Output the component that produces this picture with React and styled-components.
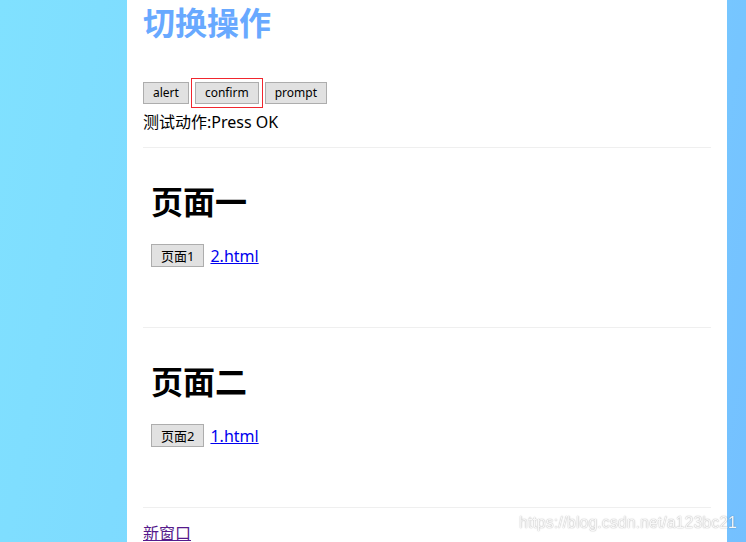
import React from "react";
import styled, { createGlobalStyle } from "styled-components";

const Global = createGlobalStyle`
  html, body { margin: 0; padding: 0; height: 100%; overflow: hidden; }
  body {
    background: linear-gradient(100deg, #80e1ff 0%, #7bd2ff 60%, #74c0ff 100%);
    font-family: "Noto Sans", "Noto Sans CJK SC", sans-serif;
  }
`;

const Stage = styled.div`
  display: flex;
  min-height: 100vh;
  padding-left: 127px;
`;

const Column = styled.main`
  width: 600px;
  min-height: 100vh;
  background: #fff;
  box-sizing: border-box;
  padding: 2px 16px 0;
`;

const Title = styled.h1`
  margin: 0;
  font-family: "Noto Sans CJK SC", sans-serif;
  font-size: 32px;
  line-height: 38px;
  font-weight: 700;
  color: #68a9ff;
`;

const ButtonRow = styled.div`
  display: flex;
  gap: 6px;
  margin-top: 42px;
  height: 22px;
`;

const Btn = styled.button`
  height: ${(p) => (p.$tall ? 23 : 22)}px;
  padding: 0 9px;
  margin: 0;
  border: 1px solid #adadad;
  background: #e1e1e1;
  color: #000;
  font-family: "Noto Sans", "Noto Sans CJK SC", sans-serif;
  font-size: ${(p) => (p.$tall ? 13 : 12)}px;
  line-height: 18px;
  border-radius: 0;
  outline: ${(p) => (p.$focused ? "1px solid #f0262e" : "none")};
  outline-offset: 3px;
`;

const Status = styled.div`
  margin-top: 8px;
  font-size: 16px;
  line-height: 20px;
  color: #000;
`;

const Rule = styled.hr`
  margin: ${(p) => p.$top}px 0 0;
  border: 0;
  border-top: 1px solid #efefef;
  height: 0;
`;

const Section = styled.section`
  height: 179px;
  box-sizing: border-box;
  padding: 32px 8px 0;
`;

const PageHeading = styled.h2`
  margin: 0;
  font-family: "Noto Sans CJK SC", sans-serif;
  font-size: 32px;
  line-height: 40px;
  font-weight: 700;
  color: #000;
`;

const PageRow = styled.div`
  display: flex;
  align-items: center;
  gap: 6px;
  margin-top: 24px;
`;

const Link = styled.a`
  font-size: 16px;
  line-height: 20px;
  color: ${(p) => (p.$visited ? "#551a8b" : "#0000ee")};
  text-decoration: underline;
`;

const Footer = styled.div`
  margin-top: 15px;
  line-height: 20px;
`;

const Watermark = styled.div`
  position: fixed;
  right: 9px;
  bottom: 10px;
  font-family: "Liberation Sans", Arial, sans-serif;
  font-size: 16px;
  color: rgba(255, 255, 255, 0.92);
  text-shadow: 0 0 1px rgba(0, 0, 0, 0.35), 0 0 2px rgba(0, 0, 0, 0.15);
  pointer-events: none;
`;

const pages = [
  { title: "页面一", btn: "页面1", link: "2.html" },
  { title: "页面二", btn: "页面2", link: "1.html" },
];

export default function App() {
  return (
    <>
      <Global />
      <Stage>
        <Column>
          <Title>切换操作</Title>
          <ButtonRow>
            <Btn>alert</Btn>
            <Btn $focused>confirm</Btn>
            <Btn>prompt</Btn>
          </ButtonRow>
          <Status>测试动作:Press OK</Status>
          <Rule $top={15} />
          {pages.map((p) => (
            <React.Fragment key={p.title}>
              <Section>
                <PageHeading>{p.title}</PageHeading>
                <PageRow>
                  <Btn $tall>{p.btn}</Btn>
                  <Link href="#">{p.link}</Link>
                </PageRow>
              </Section>
              <Rule $top={0} />
            </React.Fragment>
          ))}
          <Footer>
            <Link href="#" $visited>新窗口</Link>
          </Footer>
        </Column>
      </Stage>
      <Watermark>https://blog.csdn.net/a123bc21</Watermark>
    </>
  );
}
